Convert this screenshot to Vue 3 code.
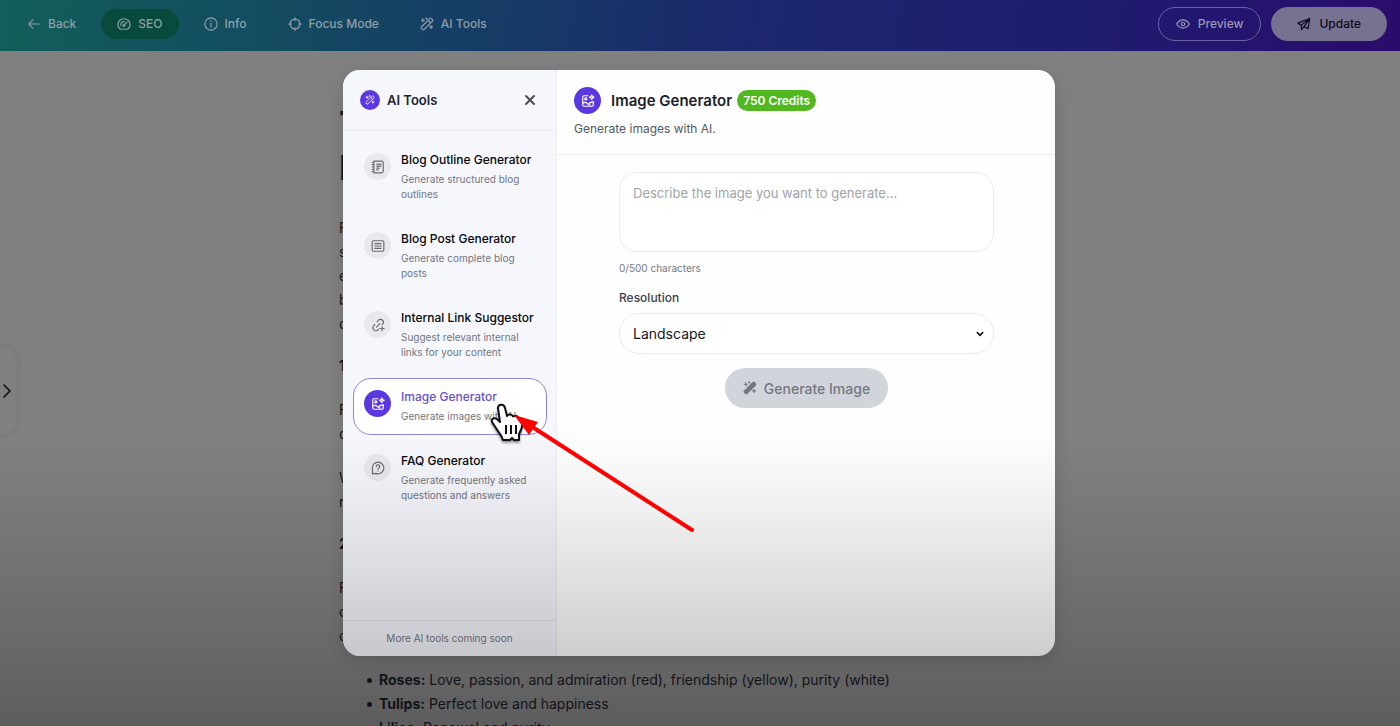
<script setup>
import { ref, h } from 'vue'

const wand = [
  'M4.5 21.5l-2-2a1.6 1.6 0 0 1 0-2.300L17.200 2.500a1.600 1.600 0 0 1 2.300 0l2 2a1.600 1.600 0 0 1 0 2.300L6.800 21.500a1.600 1.600 0 0 1-2.300 0z',
  'M14 6l4 4',
  'M5 3v5M2.500 5.500h5',
  'M19 14.500v5M16.500 17h5',
  'M11 1.500v2M10 2.500h2',
]
const image = [
  'M12 3H5a2 2 0 0 0-2 2v14a2 2 0 0 0 2 2h14a2 2 0 0 0 2-2v-6',
  'M18.500 1.500l1.200 2.800 2.800 1.200-2.800 1.200-1.200 2.800-1.200-2.800-2.800-1.200 2.800-1.200z',
  'M10 8.500a1.800 1.800 0 1 1-3.600 0 1.800 1.800 0 0 1 3.600 0z',
  'M3.500 15.500c3-2 5-1.500 7 .5s3 3 5 3',
  'M13 17.500c1-2.500 3.500-4 7.500-3.500',
]
const paths = {
  back: ['M21 12H4', 'M10 5l-7 7 7 7'],
  gauge: ['M6.500 21C3.500 19.500 1.500 16.800 1.500 13.200 1.500 7.500 6.200 3 12 3s10.500 4.500 10.500 10.200c0 3.600-2 6.300-5 7.800z', 'M12.500 13.500l4.500-4.500', 'M6.500 14.500a5.600 5.600 0 0 1 6-6.500', 'M13.500 14.500a1.600 1.600 0 1 1-3.200 0 1.600 1.600 0 0 1 3.200 0z'],
  info: ['M22.500 12a10.500 10.500 0 1 1-21 0 10.500 10.500 0 0 1 21 0z', 'M12 11v6', 'M12 7v.5'],
  focus: ['M20.500 12a8.500 8.500 0 1 1-17 0 8.500 8.500 0 0 1 17 0z', 'M12 1v5M12 18v5M1 12h5M18 12h5'],
  wand,
  eye: ['M1 12c3-4.500 6.500-7 11-7s8 2.500 11 7c-3 4.500-6.500 7-11 7S4 16.500 1 12z', 'M15 12a3 3 0 1 1-6 0 3 3 0 0 1 6 0z'],
  send: ['M22 2.500L1.500 10.500l6 3.500L22 2.500l-3 17.500-7-3.500L22 2.500', 'M7.500 14v7.500l4.500-5'],
  outline: ['M6 2h12a3 3 0 0 1 3 3v14a3 3 0 0 1-3 3H6', 'M5 2v20', 'M2 4h1M2 8h2M2 12h2M2 16h2M2 20h1', 'M10 7h7M10 10.500h7M10 14h4M10 17h2'],
  post: ['M4 3h16a2 2 0 0 1 2 2v14a2 2 0 0 1-2 2H4a2 2 0 0 1-2-2V5a2 2 0 0 1 2-2z', 'M6.500 8h11M6.500 12h11M6.500 16h11'],
  link: ['M9.500 15.500l5.500-6', 'M10.500 6.500l2-2.500a4.800 4.800 0 0 1 7.500 6.500l-1 1', 'M13 19l-1 1.200a4.800 4.800 0 0 1-7.500-6.400L6.500 11', 'M19 14.500v7M15.500 18h7'],
  image,
  faq: ['M12 2a10 10 0 1 1-4 19.200L2.500 22v-10A9.500 9.500 0 0 1 12 2z', 'M9 9.500a3 3 0 1 1 4.500 2.600c-1 .6-1.500 1.100-1.500 2.100', 'M12 17.200v.4'],
  close: ['M4 4l16 16M20 4L4 20'],
  down: ['M4 8l8 8 8-8'],
  right: ['M7 2l10 10L7 22'],
}

const Icon = (props) =>
  h('svg', { viewBox: '0 0 24 24', class: 'icon', 'aria-hidden': 'true' },
    paths[props.name].map((d) => h('path', { d })))
Icon.props = ['name']

const nav = [
  { icon: 'back', label: 'Back' },
  { icon: 'gauge', label: 'SEO', current: true },
  { icon: 'info', label: 'Info' },
  { icon: 'focus', label: 'Focus Mode' },
  { icon: 'wand', label: 'AI Tools' },
]
const tools = [
  { icon: 'outline', name: 'Blog Outline Generator', text: 'Generate structured blog outlines' },
  { icon: 'post', name: 'Blog Post Generator', text: 'Generate complete blog posts' },
  { icon: 'link', name: 'Internal Link Suggestor', text: 'Suggest relevant internal links for your content' },
  { icon: 'image', name: 'Image Generator', text: 'Generate images with AI.' },
  { icon: 'faq', name: 'FAQ Generator', text: 'Generate frequently asked questions and answers' },
]
const active = ref('Image Generator')
const prompt = ref('')
const resolution = ref('Landscape')
</script>

<template>
  <div class="page">
    <header class="bar">
      <nav class="nav">
        <button v-for="n in nav" :key="n.label" type="button" class="nav-btn" :class="{ current: n.current }">
          <Icon :name="n.icon" />{{ n.label }}
        </button>
      </nav>
      <div class="actions">
        <button type="button" class="act preview"><Icon name="eye" />Preview</button>
        <button type="button" class="act update"><Icon name="send" />Update</button>
      </div>
    </header>

    <article class="article">
      <h1>T<br />B</h1>
      <p>F<br />s<br />e<br />b<br />c</p>
      <h2>1</h2>
      <p>F<br />c</p>
      <p>W<br />r</p>
      <h2>2</h2>
      <p>F<br />c<br />c</p>
      <ul>
        <li><b>Roses:</b> Love, passion, and admiration (red), friendship (yellow), purity (white)</li>
        <li><b>Tulips:</b> Perfect love and happiness</li>
        <li><b>Lilies:</b> Renewal and purity</li>
      </ul>
    </article>

    <button type="button" class="drawer" aria-label="Open panel"><Icon name="right" /></button>

    <div class="overlay">
      <section class="modal" role="dialog" aria-label="AI Tools">
        <aside class="side">
          <div class="side-head">
            <span class="disc small"><Icon name="wand" /></span>
            <h3>AI Tools</h3>
            <button type="button" class="close" aria-label="Close"><Icon name="close" /></button>
          </div>
          <div class="tools">
            <button
              v-for="t in tools"
              :key="t.name"
              type="button"
              class="tool"
              :class="{ active: t.name === active }"
              @click="active = t.name"
            >
              <span class="disc"><Icon :name="t.icon" /></span>
              <span class="tool-text">
                <span class="tool-name">{{ t.name }}</span>
                <span class="tool-desc">{{ t.text }}</span>
              </span>
            </button>
          </div>
          <p class="side-foot">More AI tools coming soon</p>
        </aside>
        <div class="main">
          <div class="main-head">
            <div class="title-row">
              <span class="disc"><Icon name="image" /></span>
              <h2>Image Generator</h2>
              <span class="badge">750 Credits</span>
            </div>
            <p>Generate images with AI.</p>
          </div>
          <form class="form" @submit.prevent>
            <textarea v-model="prompt" aria-label="Image description" maxlength="500" placeholder="Describe the image you want to generate..."></textarea>
            <p class="count">{{ prompt.length }}/500 characters</p>
            <label for="resolution">Resolution</label>
            <div class="select">
              <select id="resolution" v-model="resolution">
                <option>Landscape</option>
              </select>
              <Icon name="down" />
            </div>
            <button type="submit" class="generate"><Icon name="wand" />Generate Image</button>
          </form>
        </div>
      </section>
    </div>

    <div class="shade"></div>

    <svg class="cursor" viewBox="0 0 34 40" aria-hidden="true">
      <path d="M8 5c0-4 6-4.500 7 0l2 8c1-2 5-2 6 .5 2-1.500 5-.5 5.500 1.500 2.500-.5 4.500 1 4 4 0 5-1 8-3.500 12v6h-5l-2-2-2 2h-7c-1-5-5-8-7-12l-4-6c-1-3 2-5 5-3l3 3z" />
      <path class="lines" d="M16 22v9M21 22v9M26 22v9" />
    </svg>
    <svg class="arrow" viewBox="0 0 182 120" aria-hidden="true">
      <path class="shaft" d="M20 13l158 102" />
      <path class="head" d="M0 0l24 7-9 13z" />
    </svg>
  </div>
</template>

<style>
body {
  margin: 0;
}
</style>

<style scoped>
.page {
  position: relative;
  height: 100vh;
  overflow: hidden;
  background: #808080;
  font-family: Inter, "Liberation Sans", sans-serif;
  color: #17181f;
}
button, select, textarea {
  font: inherit;
  color: inherit;
  margin: 0;
}
button {
  border: 0;
  background: none;
  padding: 0;
  cursor: pointer;
}
h1, h2, h3, p, ul {
  margin: 0;
}
.icon {
  width: 14px;
  height: 14px;
  flex: none;
  fill: none;
  stroke: currentColor;
  stroke-width: 2;
  stroke-linecap: round;
  stroke-linejoin: round;
}
.bar {
  display: flex;
  justify-content: space-between;
  align-items: center;
  height: 51px;
  padding: 0 13px 4px 11px;
  box-sizing: border-box;
  background: linear-gradient(100deg, #125e5a 0%, #134b60 20%, #163b66 36%, #1b286c 52%, #1f1c70 78%, #2b0c6c 100%);
  font-size: 12px;
  font-weight: 500;
  color: #8f9fa6;
}
.nav, .actions {
  display: flex;
  gap: 9px;
}
.nav-btn {
  display: flex;
  align-items: center;
  gap: 7px;
  height: 30px;
  padding: 0 16px;
  border-radius: 15px;
}
.nav-btn.current {
  background: #084a3c;
}
.actions {
  gap: 10px;
}
.act {
  display: flex;
  align-items: center;
  justify-content: center;
  gap: 8px;
  height: 34px;
  padding: 0 17px;
  border-radius: 17px;
  box-sizing: border-box;
}
.preview {
  border: 1px solid #6a64a0;
  color: #9b98b8;
}
.update {
  padding: 0 26px;
  background: #77728f;
  color: #0b0a20;
}
.article {
  max-width: 722px;
  margin: 51px auto 0;
  font-size: 14px;
  line-height: 24px;
}
.article h1 {
  font-size: 34px;
  line-height: 44px;
  margin-bottom: 26px;
}
.article h2 {
  font-size: 14px;
  line-height: 24px;
  margin: 18px 0 20px;
}
.article p {
  margin-top: 20px;
}
.article ul {
  margin-top: 20px;
  padding-left: 40px;
  list-style: none;
}
.article li {
  position: relative;
}
.article li::before {
  content: "";
  position: absolute;
  left: -12px;
  top: 10px;
  width: 5px;
  height: 5px;
  border-radius: 50%;
  background: currentColor;
}
.drawer {
  position: absolute;
  left: 0;
  top: 346px;
  width: 17px;
  height: 90px;
  border-radius: 0 17px 17px 0;
  box-shadow: 1px 0 5px #74767d;
  background: #808080;
}
.drawer .icon {
  display: block;
  stroke-width: 3;
}
.overlay {
  position: absolute;
  inset: 0;
  display: flex;
  justify-content: center;
  padding: 70px 26px 70px 24px;
}
.modal {
  display: flex;
  width: 100%;
  max-width: 712px;
  border-radius: 17px;
  overflow: hidden;
  background: #fefefe;
  box-shadow: 0 5px 18px rgba(0, 0, 0, 0.14);
}
.side {
  display: flex;
  flex-direction: column;
  width: 30%;
  min-width: 214px;
  flex: none;
  border-right: 1px solid #eceef3;
  background: #f6f7fd;
  box-sizing: border-box;
}
.side-head {
  display: flex;
  align-items: center;
  gap: 7px;
  height: 60px;
  padding: 0 20px 0 17px;
  border-bottom: 1px solid #ebedf2;
}
.side-head h3 {
  flex: 1;
  font-size: 13px;
  font-weight: 600;
  color: #23252e;
}
.close {
  display: flex;
  color: #4a4c55;
}
.close .icon {
  stroke-width: 4;
  width: 12px;
  height: 12px;
}
.disc {
  display: flex;
  align-items: center;
  justify-content: center;
  flex: none;
  width: 27px;
  height: 27px;
  border-radius: 50%;
  background: #5b37e0;
  color: #fff;
}
.disc.small {
  width: 20px;
  height: 20px;
}
.disc.small .icon {
  width: 10px;
  height: 10px;
}
.tools {
  display: flex;
  flex-direction: column;
  gap: 7px;
  flex: 1;
  padding: 10px 9px 10px 10px;
}
.tool {
  display: flex;
  align-items: flex-start;
  gap: 10px;
  padding: 9px 10px 10px;
  border: 1px solid transparent;
  border-radius: 18px;
  text-align: left;
}
.tool .disc {
  margin-top: 2px;
}
.tool:not(.active) .disc {
  background: #e7e9ed;
  color: #686a72;
}
.tool.active {
  border-color: #8f83d6;
  background: #fff;
}
.tool-text {
  display: flex;
  flex-direction: column;
  gap: 3px;
}
.tool-name {
  font-size: 12px;
  font-weight: 500;
  line-height: 18px;
  color: #050609;
}
.active .tool-name {
  color: #6650cb;
}
.tool-desc {
  font-size: 10px;
  line-height: 15px;
  color: #73757d;
}
.side-foot {
  border-top: 1px solid #e8eaef;
  font-size: 10px;
  line-height: 35px;
  text-align: center;
  color: #777982;
}
.main {
  flex: 1;
  min-width: 0;
}
.main-head {
  padding: 17px 17px 16px;
  border-bottom: 1px solid #ededf0;
}
.title-row {
  display: flex;
  align-items: center;
}
.title-row h2 {
  margin: 0 5px 0 10px;
  font-size: 15px;
  font-weight: 600;
  color: #1d1f28;
}
.badge {
  padding: 0 6px;
  border-radius: 11px;
  background: #52b81f;
  color: #fff;
  font-size: 12px;
  font-weight: 600;
  line-height: 21px;
}
.main-head p {
  margin-top: 6px;
  font-size: 12px;
  line-height: 18px;
  color: #55575f;
}
.form {
  display: flex;
  flex-direction: column;
  padding: 17px 61px 0 62px;
}
textarea {
  height: 80px;
  padding: 10px 13px;
  border: 1px solid #ebebed;
  border-radius: 18px;
  box-sizing: border-box;
  resize: none;
  background: #fff;
  font-size: 13px;
  line-height: 20px;
}
textarea::placeholder {
  color: #a0a2a8;
  opacity: 1;
}
.count {
  margin-top: 8px;
  font-size: 10px;
  line-height: 16px;
  color: #777980;
}
label {
  margin: 13px 0 6px;
  font-size: 12px;
  font-weight: 500;
  line-height: 18px;
  color: #3d3f49;
}
.select {
  display: flex;
  align-items: center;
  position: relative;
}
select {
  width: 100%;
  height: 41px;
  padding: 0 13px;
  border: 1px solid #ebebed;
  border-radius: 20px;
  appearance: none;
  background: #fff;
  font-size: 14px;
  color: #17181d;
}
.select .icon {
  position: absolute;
  right: 10px;
  width: 8px;
  height: 8px;
  stroke-width: 5;
}
.generate {
  display: flex;
  align-items: center;
  gap: 7px;
  align-self: center;
  height: 40px;
  margin-top: 14px;
  padding: 0 18px;
  border-radius: 20px;
  background: #d1d4da;
  color: #747780;
  font-size: 14px;
  font-weight: 500;
}
.generate .icon {
  fill: currentColor;
}
.shade {
  position: absolute;
  inset: 0;
  pointer-events: none;
  background: linear-gradient(transparent 60%, rgba(0, 0, 0, 0.05) 69%, rgba(0, 0, 0, 0.12) 80%, rgba(0, 0, 0, 0.19) 90%, rgba(0, 0, 0, 0.28) 100%);
}
.cursor {
  position: absolute;
  left: 490px;
  top: 403px;
  width: 34px;
  height: 40px;
  fill: #fff;
  stroke: #111;
  stroke-width: 2;
  stroke-linejoin: round;
  filter: drop-shadow(0 2px 1px rgba(0, 0, 0, 0.4));
}
.arrow {
  position: absolute;
  left: 514px;
  top: 415px;
  width: 182px;
  height: 120px;
}
.shaft {
  fill: none;
  stroke: #f00;
  stroke-width: 4;
  stroke-linecap: round;
}
.head {
  fill: #f00;
}
</style>
